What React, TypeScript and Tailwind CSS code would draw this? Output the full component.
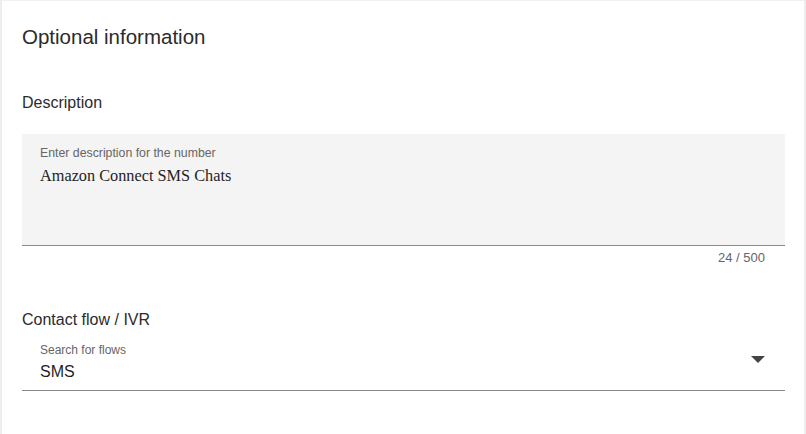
import React from 'react';

export default function App() {
  return (
    <div
      className="w-[806px] h-[434px] bg-white overflow-hidden"
      style={{ fontFamily: '"Liberation Sans", Arial, sans-serif' }}
    >
      <div className="h-full ml-[2px] mr-[2px] border-t border-[#f0f0f0] bg-white flex flex-col pl-[20px] pr-[19px] shadow-[-2px_0_0_#eeeeee,2px_0_0_#eeeeee]">
        {/* Header */}
        <h2 className="text-[20.5px] leading-[24px] text-[#2b2b2b] mt-[24px]">Optional information</h2>

        {/* Description */}
        <div className="mt-[44px] text-[16px] leading-[20px] text-[#2b2b2b]">Description</div>
        <div className="mt-[21px] h-[112px] bg-[#f4f4f4] border-b border-[#8a8a8a] px-[18px] pt-[12px]">
          <div className="text-[12.3px] leading-[14px] text-[#666666]">Enter description for the number</div>
          <div
            className="mt-[7px] text-[16.3px] leading-[18px] text-[#1f1f1f]"
            style={{ fontFamily: '"Liberation Serif", "Times New Roman", serif' }}
          >
            Amazon Connect SMS Chats
          </div>
        </div>
        <div className="mt-[5px] pr-[20px] text-right text-[13px] leading-[14px] text-[#666666]">24 / 500</div>

        {/* Contact flow */}
        <div className="mt-[45px] text-[16px] leading-[20px] text-[#2b2b2b]">Contact flow / IVR</div>
        <div className="mt-[4px] h-[57px] border-b border-[#8a8a8a] px-[18px] pt-[9px] flex items-start justify-between">
          <div>
            <div className="text-[12px] leading-[14px] text-[#666666]">Search for flows</div>
            <div className="mt-[5px] text-[16px] leading-[20px] text-[#1f1f1f]">SMS</div>
          </div>
          <svg width="14" height="8" viewBox="0 0 14 8" className="mt-[13px] mr-[2px]">
            <path d="M0 0 L14 0 L7 7 Z" fill="#444444" />
          </svg>
        </div>
      </div>
    </div>
  );
}
